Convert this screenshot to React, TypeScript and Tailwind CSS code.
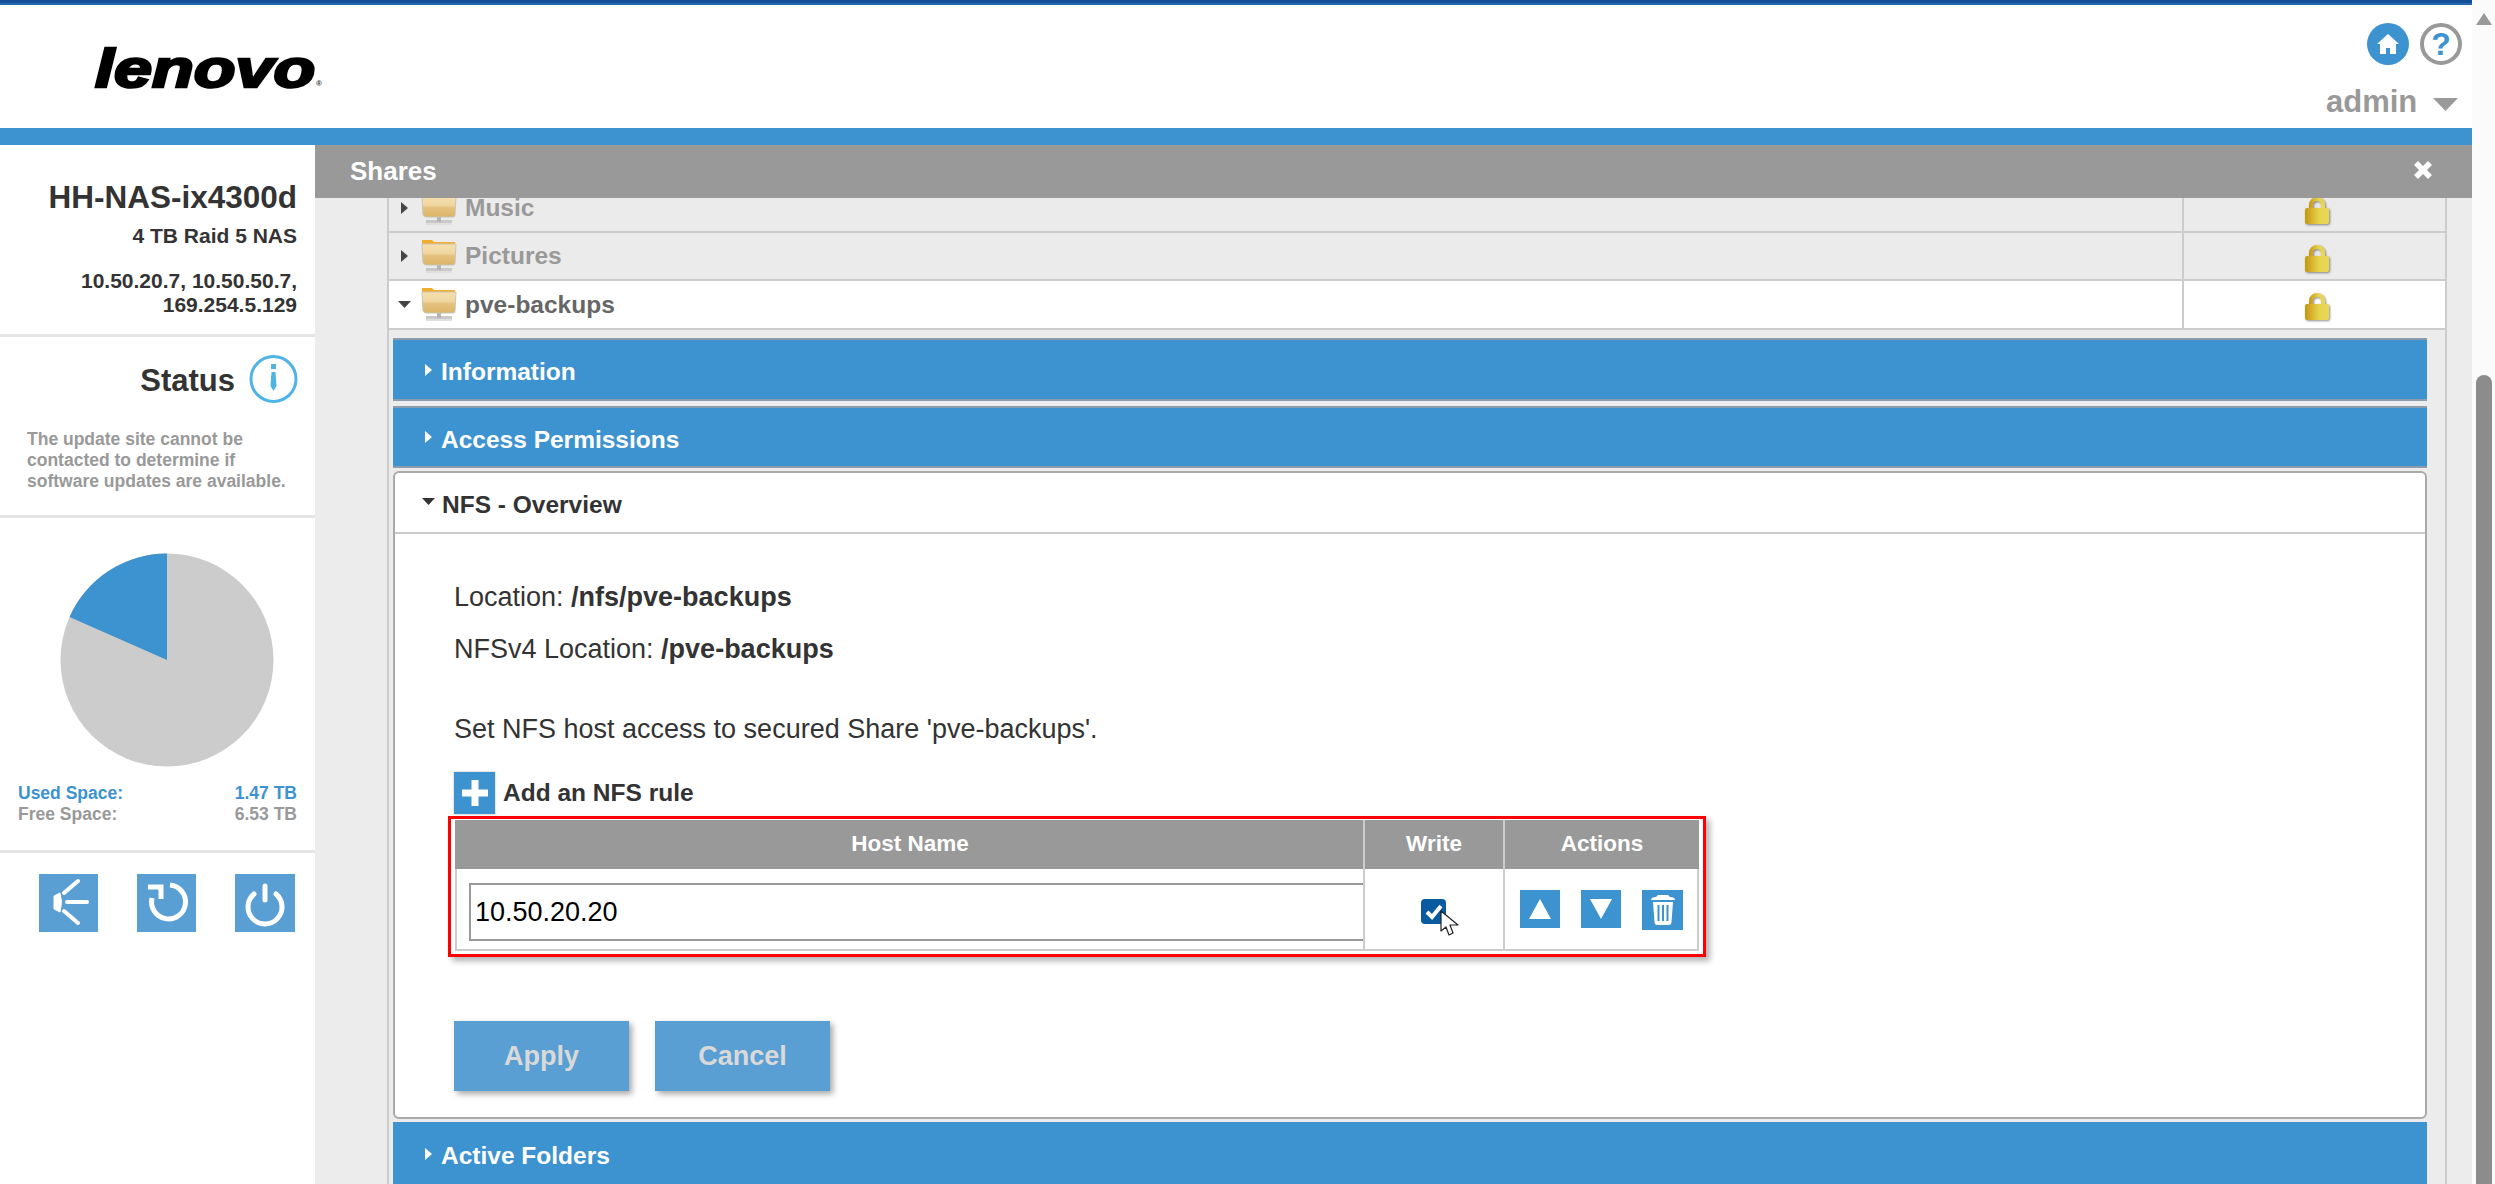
import React from "react";

function Tri({ dir, className }: { dir: "up" | "down" | "right"; className: string }) {
  const pts = dir === "up" ? "0,10 6,0 12,10" : dir === "down" ? "0,0 12,0 6,10" : "0,0 10,6 0,12";
  return (
    <svg viewBox={dir === "right" ? "0 0 10 12" : "0 0 12 10"} preserveAspectRatio="none" className={`shrink-0 ${className}`}>
      <polygon points={pts} fill="currentColor" />
    </svg>
  );
}

function Folder() {
  return (
    <svg width="38" height="36" viewBox="0 0 38 36" className="mt-[3px] shrink-0 blur-[0.4px]">
      <defs>
        <linearGradient id="fb" x1="0" y1="0" x2="0" y2="1">
          <stop offset="0" stopColor="#f6e0ae" />
          <stop offset="0.45" stopColor="#efd69f" />
          <stop offset="0.55" stopColor="#e4c27f" />
          <stop offset="1" stopColor="#dcb468" />
        </linearGradient>
      </defs>
      <rect x="6" y="28" width="26" height="3" fill="#c9c9c9" />
      <rect x="17" y="22" width="4" height="8" fill="#b5b5b5" />
      <rect x="6" y="31" width="26" height="2" fill="#e0e0e0" />
      <path d="M2 0h10l2 2h21v3H2z" fill="#f1ae2c" />
      <path d="M2 4h34l-1 19q0 2-2 2H6q-2 0-3-2z" fill="url(#fb)" stroke="#c9c4b8" strokeWidth="1" />
    </svg>
  );
}

function Lock() {
  return (
    <svg width="26" height="30" viewBox="0 0 26 30" className="drop-shadow-[1px_1px_1px_rgba(0,0,0,0.45)]">
      <defs>
        <linearGradient id="lk" x1="0" y1="0" x2="1" y2="0">
          <stop offset="0" stopColor="#c6960f" />
          <stop offset="0.6" stopColor="#e8d44e" />
          <stop offset="1" stopColor="#e9d856" />
        </linearGradient>
      </defs>
      <path d="M5 13V9a8 8 0 0 1 16 0v4h-4V9a4 4 0 0 0-8 0v4z" fill="url(#lk)" />
      <rect x="1" y="12" width="24" height="16" rx="2" fill="url(#lk)" />
    </svg>
  );
}

function ShareRow({ name, active, arrowDown }: { name: string; active?: boolean; arrowDown?: boolean }) {
  return (
    <div className={`flex border-b-2 border-[#cccccc] ${active ? "h-[49px] bg-white" : "h-[48px] bg-[#ebebeb]"}`}>
      <div className="flex flex-1 items-center">
        <div className="flex w-[31px] justify-center">
          {arrowDown ? <Tri dir="down" className="h-[7px] w-[13px] text-[#444]" /> : <Tri dir="right" className="h-[12px] w-[7px] text-[#444]" />}
        </div>
        <Folder />
        <span className={`mt-[1px] ml-[7px] text-[24.5px] leading-none font-bold ${active ? "text-[#666]" : "text-[#999]"}`}>{name}</span>
      </div>
      <div className="flex w-[263px] items-center justify-center border-l-2 border-[#cccccc] pt-[5px] pl-[4px]">
        <Lock />
      </div>
    </div>
  );
}

function BlueBar({ title, className }: { title: string; className: string }) {
  return (
    <div className={`flex items-center bg-[#3d92d0] pt-[6px] pl-[32px] ${className}`}>
      <Tri dir="right" className="mb-[6px] h-[12px] w-[7px] text-white" />
      <span className="ml-[9px] text-[24.5px] leading-none font-bold text-white">{title}</span>
    </div>
  );
}

function SquareBtn({ children, className }: { children: React.ReactNode; className: string }) {
  return <div className={`flex items-center justify-center bg-[#3d92d0] ${className}`}>{children}</div>;
}

export default function App() {
  return (
    <div className="flex h-[1184px] w-[2495px] overflow-hidden bg-white font-['Liberation_Sans',Arial,sans-serif]">
      <div className="flex w-[2472px] flex-col">
        {/* HEADER */}
        <div className="h-[3px] bg-[#154f95]" />
        <div className="h-[2px] bg-[#2a68b0]" />
        <div className="flex h-[123px] justify-between bg-white">
          <div className="pt-[34px] pl-[95px]">
            <div className="flex items-start">
              <span className="inline-block w-[224px] origin-left scale-x-[1.29] text-[53px] leading-[60px] font-bold text-black italic blur-[0.3px] [-webkit-text-stroke:2.5px_black]">
                lenovo
              </span>
              <span className="mt-[41px] -ml-[3px] text-[8px] leading-none font-bold text-[#333]">®</span>
            </div>
          </div>
          <div className="flex w-[146px] flex-col pt-[18px]">
            <div className="flex gap-[11px] pl-[41px]">
              <div className="flex h-[42px] w-[42px] items-center justify-center rounded-full bg-[#3d92d0]">
                <svg width="24" height="22" viewBox="0 0 24 22">
                  <path d="M12 1 1 11h3v10h6v-6h4v6h6V11h3z" fill="white" />
                </svg>
              </div>
              <div className="flex h-[42px] w-[42px] items-center justify-center rounded-full border-[4px] border-[#999] text-[32px] leading-none font-bold text-[#3d92d0]">
                ?
              </div>
            </div>
            <div className="mt-[19px] flex items-center pr-[14px]">
              <span className="text-[31px] leading-[36px] font-bold text-[#999]">admin</span>
              <Tri dir="down" className="mt-[4px] ml-[16px] h-[13px] w-[25px] text-[#999]" />
            </div>
          </div>
        </div>
        <div className="h-[17px] bg-[#3d92d0]" />

        <div className="flex min-h-0 flex-1">
          {/* SIDEBAR */}
          <div className="w-[315px] shrink-0 bg-white">
            <div className="border-b-[3px] border-[#e5e5e5] pt-[34px] pr-[18px] pb-[17px] text-right font-bold text-[#333]">
              <p className="text-[31.5px] leading-[36px]">HH-NAS-ix4300d</p>
              <p className="mt-[9px] text-[21px] leading-[24px]">4 TB Raid 5 NAS</p>
              <p className="mt-[21px] text-[21px] leading-[24px]">10.50.20.7, 10.50.50.7,</p>
              <p className="text-[21px] leading-[24px]">169.254.5.129</p>
            </div>

            <div className="border-b-[3px] border-[#e5e5e5] pt-[18px] pb-[23px]">
              <div className="flex h-[48px] items-center justify-end pr-[17px]">
                <span className="mt-[5px] text-[31px] font-bold text-[#333]">Status</span>
                <svg width="49" height="48" viewBox="0 0 49 48" className="ml-[14px]">
                  <circle cx="24.5" cy="24" r="22.5" fill="none" stroke="#4fb3e4" strokeWidth="3" />
                  <rect x="22" y="9" width="5" height="5" fill="#4fb3e4" />
                  <path d="M22.5 17h4l1 14-3 5-3-5z" fill="#4fb3e4" />
                </svg>
              </div>
              <p className="mt-[26px] pl-[27px] text-[17.5px] leading-[21px] font-bold text-[#999]">
                The update site cannot be
                <br />
                contacted to determine if
                <br />
                software updates are available.
              </p>
            </div>

            <div className="border-b-[3px] border-[#e5e5e5] pt-[35px] pb-[25px]">
              <svg width="214" height="214" viewBox="0 0 214 214" className="ml-[60px]">
                <circle cx="107" cy="107" r="106.5" fill="#cccccc" />
                <path d="M107 107V0.5A106.5 106.5 0 0 0 9.5 64z" fill="#3d92d0" />
              </svg>
              <div className="mt-[16px] px-[18px] text-[17.5px] leading-[21px] font-bold">
                <div className="flex justify-between text-[#3d92d0]">
                  <span>Used Space:</span>
                  <span>1.47 TB</span>
                </div>
                <div className="flex justify-between text-[#999]">
                  <span>Free Space:</span>
                  <span>6.53 TB</span>
                </div>
              </div>
            </div>

            <div className="flex gap-[39px] pt-[21px] pl-[39px]">
              <div className="h-[58px] w-[59px] bg-[#5a9fd4]">
                <svg width="59" height="58" viewBox="0 0 59 58">
                  <path d="M15 22l6-3q3 9 0 19l-6-3z" fill="white" stroke="white" strokeWidth="1" />
                  <path d="M25 19 39 7M28 28h20M25 37l14 12" stroke="white" strokeWidth="4" strokeLinecap="round" fill="none" />
                </svg>
              </div>
              <div className="h-[58px] w-[59px] bg-[#5a9fd4]">
                <svg width="59" height="58" viewBox="0 0 59 58">
                  <path d="M33 11A17 17 0 1 1 15 24" stroke="white" strokeWidth="5" fill="none" />
                  <path d="M11 13H24V25" stroke="white" strokeWidth="5" fill="none" />
                </svg>
              </div>
              <div className="h-[58px] w-[60px] bg-[#5a9fd4]">
                <svg width="60" height="58" viewBox="0 0 60 58">
                  <path d="M19 20a17 17 0 1 0 22 0" stroke="white" strokeWidth="5" fill="none" strokeLinecap="round" />
                  <path d="M30 12v14" stroke="white" strokeWidth="5" strokeLinecap="round" />
                </svg>
              </div>
            </div>
          </div>

          {/* MAIN */}
          <div className="flex min-w-0 flex-1 flex-col bg-[#ececec]">
            <div className="flex h-[53px] shrink-0 items-center justify-between bg-[#999] pr-[40px] pl-[35px]">
              <span className="mb-[2px] text-[26px] leading-none font-bold text-white">Shares</span>
              <svg width="18" height="18" viewBox="0 0 18 18" className="mb-[4px]">
                <path d="M2 2l14 14M16 2 2 16" stroke="white" strokeWidth="5.500" />
              </svg>
            </div>

            <div className="min-h-0 flex-1 overflow-hidden pr-[25px] pl-[72px]">
              <div className="-mt-[13px] border-x-2 border-[#cccccc]">
                <ShareRow name="Music" />
                <ShareRow name="Pictures" />
                <ShareRow name="pve-backups" active arrowDown />

                <div className="pt-[8px] pr-[18px] pl-[4px]">
                  <BlueBar title="Information" className="h-[63px] border-y-2 border-[#8c9cad]" />
                  <BlueBar title="Access Permissions" className="mt-[5px] h-[62px] border-y-2 border-[#8c9cad]" />

                  {/* NFS PANEL */}
                  <div className="mt-[3px] rounded-[6px] border-2 border-[#aaaaaa] bg-white">
                    <div className="flex h-[61px] items-center border-b-2 border-[#cccccc] pt-[6px] pl-[27px]">
                      <Tri dir="down" className="mb-[8px] h-[7px] w-[13px] text-[#333]" />
                      <span className="ml-[7px] text-[24.5px] leading-none font-bold text-[#333]">NFS - Overview</span>
                    </div>

                    <div className="pt-[49px] pr-[40px] pb-[26px] pl-[59px] text-[27px] leading-[28px] text-[#333]">
                      <p>
                        Location: <b>/nfs/pve-backups</b>
                      </p>
                      <p className="mt-[24px]">
                        NFSv4 Location: <b>/pve-backups</b>
                      </p>
                      <p className="mt-[52px]">Set NFS host access to secured Share 'pve-backups'.</p>

                      <div className="mt-[29px] flex h-[42px] items-center">
                        <div className="flex h-[42px] w-[41px] items-center justify-center bg-[#3d92d0] shadow-[0_0_2px_rgba(0,0,0,0.3)]">
                          <svg width="30" height="30" viewBox="0 0 30 30">
                            <path d="M15 2v26M2 15h26" stroke="white" strokeWidth="7" />
                          </svg>
                        </div>
                        <span className="ml-[8px] text-[24.5px] font-bold">Add an NFS rule</span>
                      </div>

                      {/* RULE TABLE */}
                      <div className="mt-[2px] -ml-[6px] w-[1258px] border-[3px] border-[#ff0000] pt-[1px] pr-[4px] pb-[3px] pl-[4px] shadow-[4px_4px_6px_rgba(0,0,0,0.3)]">
                        <div className="grid grid-cols-[908px_140px_196px] text-[22.5px] leading-none font-bold text-white">
                          <div className="flex h-[49px] items-center justify-center bg-[#999] pl-[2px]">Host Name</div>
                          <div className="flex h-[49px] items-center justify-center border-l-2 border-[#cccccc] bg-[#999]">Write</div>
                          <div className="flex h-[49px] items-center justify-center border-l-2 border-[#cccccc] bg-[#999]">Actions</div>

                          <div className="h-[82px] border-b-2 border-l-2 border-[#cccccc] pt-[14px] pl-[12px]">
                            <input
                              readOnly
                              value="10.50.20.20"
                              className="h-[58px] w-full border-2 border-r-0 border-[#999] bg-white pl-[4px] text-[27px] font-normal text-black outline-none"
                            />
                          </div>
                          <div className="relative h-[82px] border-b-2 border-l-2 border-[#cccccc]">
                            <div className="absolute top-[30px] left-[56px] flex h-[25px] w-[25px] items-center justify-center rounded-[4px] bg-[#0a5aa0]">
                              <svg width="20" height="18" viewBox="0 0 20 18">
                                <path d="M3 9l5 5 9-11" stroke="white" strokeWidth="4" fill="none" />
                              </svg>
                            </div>
                            <svg width="20" height="28" viewBox="0 0 20 28" className="absolute top-[41px] left-[75px]">
                              <path d="M1 1v20l5-4 3 8 4-2-3-8h8z" fill="white" stroke="#222" strokeWidth="1.2" strokeLinejoin="round" />
                            </svg>
                          </div>
                          <div className="flex h-[82px] items-start gap-[21px] border-x-2 border-b-2 border-[#cccccc] pt-[21px] pl-[15px]">
                            <SquareBtn className="h-[38px] w-[40px]">
                              <Tri dir="up" className="h-[20px] w-[22px] text-white" />
                            </SquareBtn>
                            <SquareBtn className="h-[38px] w-[40px]">
                              <Tri dir="down" className="h-[20px] w-[22px] text-white" />
                            </SquareBtn>
                            <SquareBtn className="h-[40px] w-[41px]">
                              <svg width="26" height="30" viewBox="0 0 26 30">
                                <path d="M1 5q0-3 5-3l2-2h10l2 2q5 0 5 3z" fill="white" />
                                <path d="M3 7h20l-1.500 20q0 3-3 3H7.500q-3 0-3-3z" fill="white" />
                                <path d="M8.500 10v16M13 10v16M17.500 10v16" stroke="#3d92d0" strokeWidth="2" />
                              </svg>
                            </SquareBtn>
                          </div>
                        </div>
                      </div>

                      <div className="mt-[64px] flex gap-[26px]">
                        <button className="h-[70px] w-[175px] bg-[#5a9fd4] font-bold text-[#d9d9d9] shadow-[3px_3px_6px_rgba(0,0,0,0.35)]">
                          Apply
                        </button>
                        <button className="h-[70px] w-[175px] bg-[#5a9fd4] font-bold text-[#d9d9d9] shadow-[3px_3px_6px_rgba(0,0,0,0.35)]">
                          Cancel
                        </button>
                      </div>
                    </div>
                  </div>

                  <BlueBar title="Active Folders" className="mt-[3px] h-[63px]" />
                </div>
              </div>
            </div>
          </div>
        </div>
      </div>

      {/* SCROLLBAR */}
      <div className="flex w-[23px] flex-col items-center bg-[#fbfbfb] pt-[13px]">
        <Tri dir="up" className="h-[12px] w-[16px] text-[#999]" />
        <div className="mt-[350px] h-[900px] w-[16px] shrink-0 rounded-t-[8px] bg-[#8c8c8c]" />
      </div>
    </div>
  );
}
